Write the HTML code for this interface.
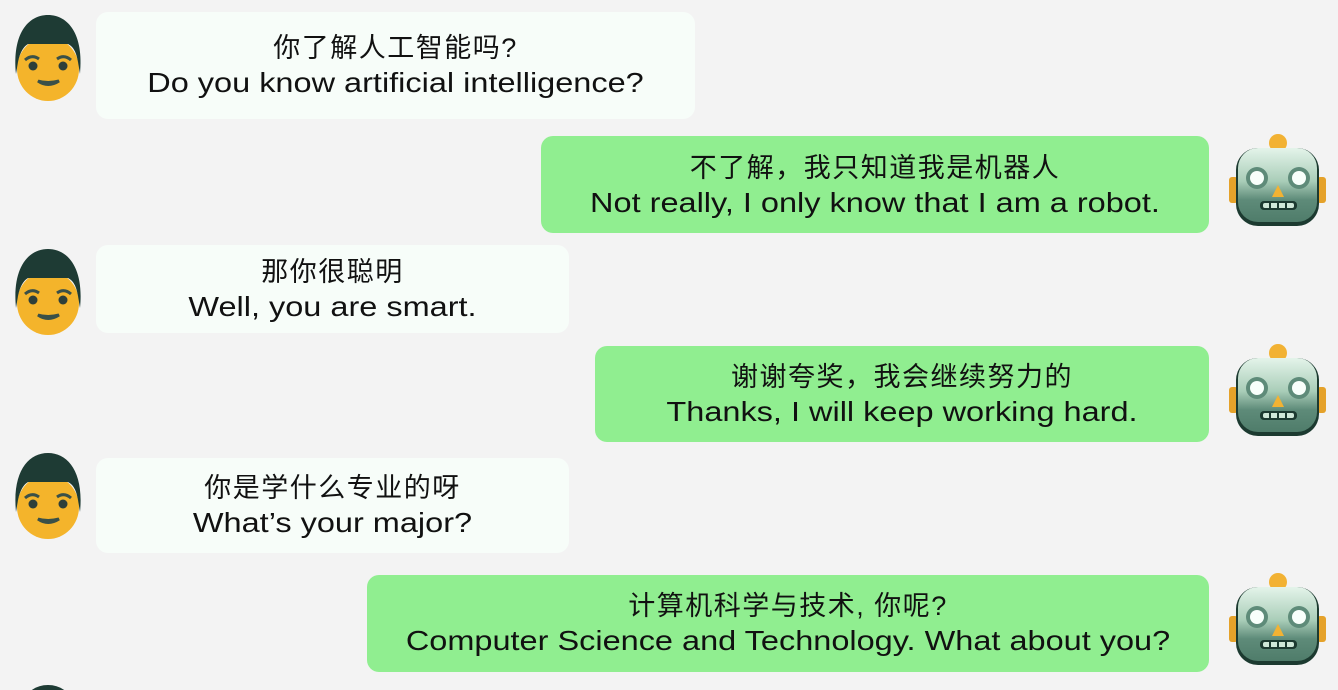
<!DOCTYPE html>
<html style="overflow:hidden;width:1338px;height:690px"><head><meta charset="utf-8"><style>
html,body{overflow:hidden}
body{margin:0;width:1338px;height:690px;background:#f3f3f3;position:relative;overflow:hidden;font-family:"Liberation Sans","Noto Sans CJK SC",sans-serif;color:#111}
.b{position:absolute;border-radius:12px;text-align:center;box-sizing:border-box;white-space:nowrap}
.u{background:#f7fdf9}
.r{background:#90ee90}
.b .c{font-size:27px;line-height:34px;margin-top:20px;letter-spacing:1.5px}
.b .e{font-size:28px;line-height:36px;transform:scaleX(1.16);transform-origin:center}
svg{position:absolute;overflow:hidden}
</style></head><body>

<svg width="0" height="0" style="position:absolute;left:0;top:0"><defs>
<g id="man">
<ellipse cx="36" cy="55" rx="31" ry="32" fill="#f4b42b"/>
<path d="M4,60 C0,20 16,1 36,1 C56,1 72,20 68,60 L66,48 C64,36 60,32 56,30 L16,30 C12,32 8,38 6,48 Z" fill="#1e3b34"/>
<path d="M13,46 Q20,40 27,45" stroke="#3a5048" stroke-width="3" fill="none"/>
<path d="M45,45 Q52,40 59,46" stroke="#3a5048" stroke-width="3" fill="none"/>
<circle cx="21" cy="52" r="4.5" fill="#2d3f3a"/>
<circle cx="51" cy="52" r="4.5" fill="#2d3f3a"/>
<path d="M26,67 Q36,74 47,67 Q36,70 26,67Z" stroke="#3a5048" stroke-width="3" fill="#5d7b70"/>
</g>
<linearGradient id="g" x1="0" y1="0" x2="0" y2="1"><stop offset="0" stop-color="#e4f4ea"/><stop offset="0.45" stop-color="#a9cdb8"/><stop offset="0.7" stop-color="#5e8b79"/><stop offset="1" stop-color="#4f7c6a"/></linearGradient>
<g id="bot">
<circle cx="50" cy="10" r="9" fill="#f2b233"/>
<path d="M40,20 Q50,14 60,20Z" fill="#2a5444"/>
<rect x="1" y="44" width="9" height="26" rx="3" fill="#e5a22a"/>
<rect x="89" y="44" width="9" height="26" rx="3" fill="#e5a22a"/>
<rect x="8" y="15" width="83" height="78" rx="22" fill="#1c3a30"/>
<rect x="10" y="15" width="79" height="74" rx="20" fill="url(#g)"/>
<circle cx="29" cy="45" r="11" fill="#5e8b79"/><circle cx="29" cy="45" r="7" fill="#f8fffb"/>
<circle cx="71" cy="45" r="11" fill="#5e8b79"/><circle cx="71" cy="45" r="7" fill="#f8fffb"/>
<path d="M50,52 L56,64 L44,64Z" fill="#f2b233"/>
<rect x="32" y="68" width="37" height="9" rx="4" fill="#1c3a30"/>
<rect x="35" y="70" width="31" height="5" rx="2" fill="#cfe8d8"/>
<path d="M42,69v7M50,69v7M58,69v7" stroke="#1c3a30" stroke-width="2"/>
</g></defs></svg>

<svg style="left:12px;top:14px" width="74" height="90"><use href="#man"/></svg>
<svg style="left:12px;top:248px" width="74" height="90"><use href="#man"/></svg>
<svg style="left:12px;top:452px" width="74" height="90"><use href="#man"/></svg>
<svg style="left:12px;top:684px" width="74" height="6"><use href="#man"/></svg>
<svg style="left:1228px;top:133px" width="100" height="96"><use href="#bot"/></svg>
<svg style="left:1228px;top:343px" width="100" height="96"><use href="#bot"/></svg>
<svg style="left:1228px;top:572px" width="100" height="96"><use href="#bot"/></svg>

<div class="b u" style="left:96px;top:12px;width:599px;height:107px"><div class="c" style="margin-top:19px">你了解人工智能吗?</div><div class="e">Do you know artificial intelligence?</div></div>
<div class="b r" style="left:541px;top:136px;width:668px;height:97px"><div class="c" style="margin-top:15px">不了解，我只知道我是机器人</div><div class="e">Not really, I only know that I am a robot.</div></div>
<div class="b u" style="left:96px;top:245px;width:473px;height:88px"><div class="c" style="margin-top:10px">那你很聪明</div><div class="e">Well, you are smart.</div></div>
<div class="b r" style="left:595px;top:346px;width:614px;height:96px"><div class="c" style="margin-top:14px">谢谢夸奖，我会继续努力的</div><div class="e">Thanks, I will keep working hard.</div></div>
<div class="b u" style="left:96px;top:458px;width:473px;height:95px"><div class="c" style="margin-top:13px">你是学什么专业的呀</div><div class="e">What’s your major?</div></div>
<div class="b r" style="left:367px;top:575px;width:842px;height:97px"><div class="c" style="margin-top:14px">计算机科学与技术, 你呢?</div><div class="e">Computer Science and Technology. What about you?</div></div>

</body></html>
